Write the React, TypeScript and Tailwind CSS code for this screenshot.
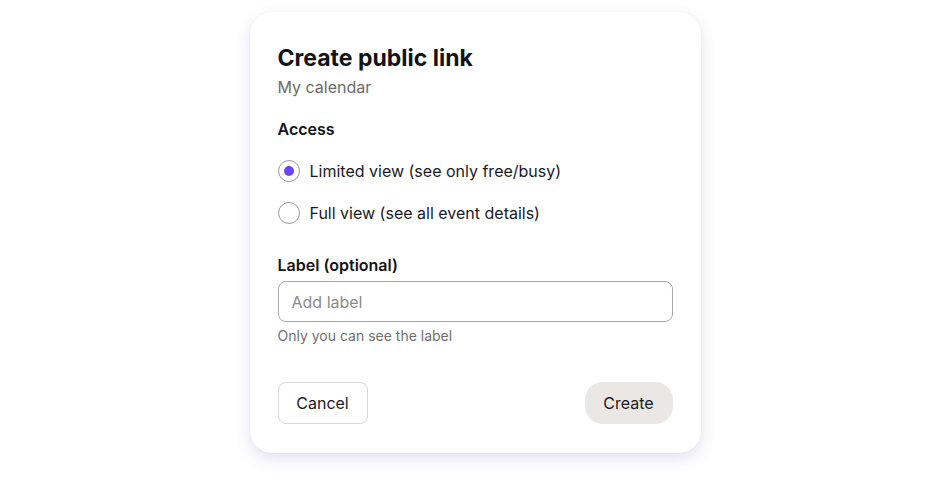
import { useState } from "react";

function Radio({ checked, label, onSelect }: { checked: boolean; label: string; onSelect: () => void }) {
  return (
    <button type="button" onClick={onSelect} className="flex items-center gap-[10px] h-6 text-left">
      <span className="flex items-center justify-center w-[22px] h-[22px] rounded-full border-[1.5px] border-[#9b9b9b] bg-white">
        {checked && <span className="w-[10px] h-[10px] rounded-full bg-[#6a45f6]" />}
      </span>
      <span className="text-base text-[#1a1a1f]">{label}</span>
    </button>
  );
}

export default function App() {
  const [access, setAccess] = useState<"limited" | "full">("limited");
  const [label, setLabel] = useState("");

  return (
    <div className="min-h-[500px] w-full bg-white flex justify-center pt-3" style={{ fontFamily: "Inter, 'Noto Sans', sans-serif" }}>
      <div className="w-[451px] h-fit bg-white rounded-[22px] px-7 pt-[29px] pb-[29px] shadow-[0_6px_16px_rgba(80,60,170,0.16),0_0_2px_rgba(0,0,0,0.06)]">
        <h1 className="text-[23px] leading-[34px] font-bold text-[#121217]">Create public link</h1>
        <p className="text-base leading-6 text-[#6b6b6b]">My calendar</p>

        <p className="mt-[18px] text-base leading-6 font-semibold text-[#121217]">Access</p>
        <div className="mt-[18px] flex flex-col gap-[18px]">
          <Radio checked={access === "limited"} label="Limited view (see only free/busy)" onSelect={() => setAccess("limited")} />
          <Radio checked={access === "full"} label="Full view (see all event details)" onSelect={() => setAccess("full")} />
        </div>

        <label className="block mt-7 text-base leading-6 font-semibold text-[#121217]">Label (optional)</label>
        <input
          value={label}
          onChange={(e) => setLabel(e.target.value)}
          placeholder="Add label"
          className="mt-1 w-full h-[41px] rounded-lg border border-[#a8a8a8] px-[13px] text-base text-[#1a1a1f] placeholder-[#8c8c8c] outline-none"
        />
        <p className="mt-1 text-sm leading-5 text-[#6f6f6f]">Only you can see the label</p>

        <div className="mt-9 flex justify-between items-center">
          <button type="button" className="h-[42px] w-[90px] rounded-lg border border-[#d9d9d9] text-base text-[#1a1a1f] bg-white">
            Cancel
          </button>
          <button type="button" className="h-[42px] w-[88px] rounded-[18px] bg-[#ebe7e4] text-base text-[#1a1a1f]">
            Create
          </button>
        </div>
      </div>
    </div>
  );
}
